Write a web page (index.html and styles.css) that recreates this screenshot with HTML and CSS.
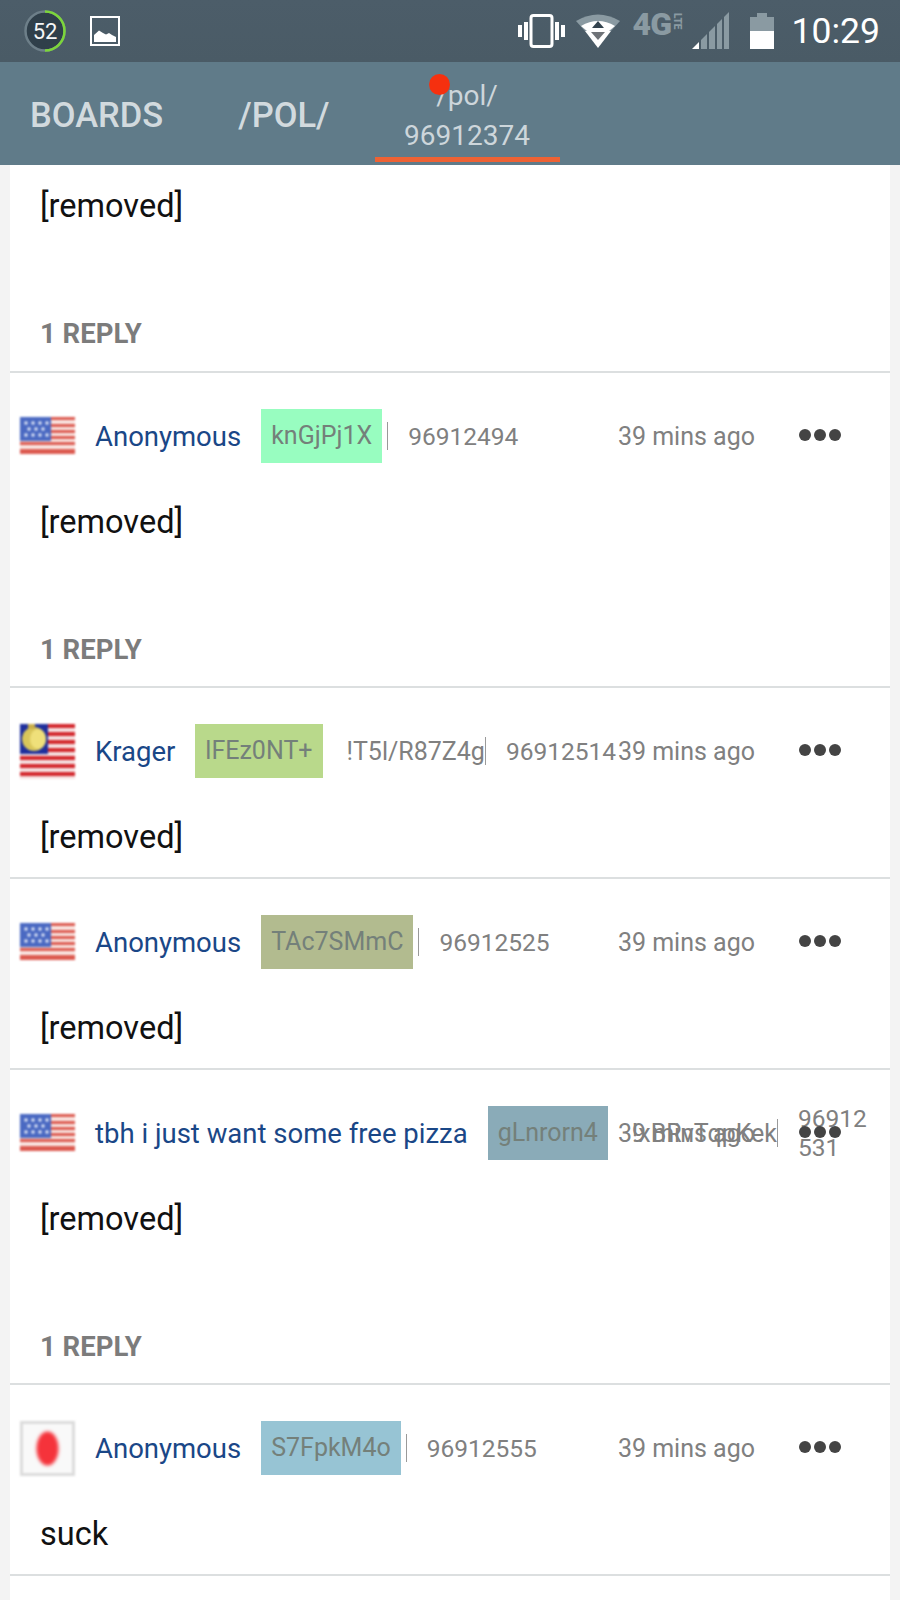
FILE: index.html
```html
<!DOCTYPE html>
<html lang="en">
<head>
<meta charset="utf-8">
<title>/pol/ 96912374</title>
<link rel="stylesheet" href="styles.css">
</head>
<body>
<header class="status">
  <div class="status-left">
    <div class="badge">
      <svg class="badge-ring" viewBox="0 0 44 44" width="44" height="44"><circle cx="22" cy="22" r="19.5" fill="#2f3f4a" stroke="#6d7f89" stroke-width="2.5"/><path d="M22 2.5A19.5 19.5 0 0 1 22 41.5" fill="none" stroke="#7cd63a" stroke-width="2.5"/></svg>
      <span class="badge-num">52</span>
    </div>
    <svg class="pic" viewBox="0 0 30 30" width="30" height="30"><rect x="1" y="1" width="28" height="28" fill="none" stroke="#fff" stroke-width="2"/><path d="M4 26V19L9 14.500L13 17L16 18.500L19 17L22 19L26 21V26Z" fill="#fff"/></svg>
  </div>
  <div class="status-right">
    <svg class="ic-vib" viewBox="0 0 47 34" width="47" height="34"><rect x="13" y="1.500" width="21" height="31" rx="2.500" fill="none" stroke="#fff" stroke-width="3"/><rect x="6" y="8" width="4" height="18" fill="#fff"/><rect x="37" y="8" width="4" height="18" fill="#fff"/><rect x="0" y="11" width="4" height="12" fill="#fff"/><rect x="43" y="11" width="4" height="12" fill="#fff"/></svg>
    <svg class="ic-wifi" viewBox="0 0 44 36" width="44" height="36"><path d="M0 8Q22 -5 44 8L35 18H9Z" fill="#8a9aa2"/><path d="M9 18H35L22 35Z" fill="#fff"/><path d="M5 13Q22 3 39 13L33 18H11Z" fill="#fff"/><path d="M22 8L28 15H16Z" fill="#33434e"/><path d="M15 19H29L22 27Z" fill="#6f7378"/></svg>
    <div class="net"><span class="net-4g">4G</span><span class="net-lte">LTE</span></div>
    <svg class="ic-signal" viewBox="0 0 38 38" width="38" height="38"><path d="M0 37L7 30V37Z" fill="#fff"/><path d="M9 28L15 22V37H9Z" fill="#8a9aa2"/><path d="M17 20L23 14V37H17Z" fill="#8a9aa2"/><path d="M25 12L30 7V37H25Z" fill="#8a9aa2"/><path d="M32 5L37 0V37H32Z" fill="#8a9aa2"/></svg>
    <svg class="ic-batt" viewBox="0 0 24 36" width="24" height="36"><path d="M0 4H7V0H17V4H24V18H0Z" fill="#8a9aa2"/><rect y="18" width="24" height="18" fill="#fff"/></svg>
    <span class="clock">10:29</span>
  </div>
</header>

<nav class="tabs">
  <a class="tab tab-boards">BOARDS</a>
  <a class="tab tab-board">/POL/</a>
  <a class="tab tab-active"><span class="dot"></span><span>/pol/</span><span>96912374</span></a>
</nav>

<main class="list">
  <article class="post post-clipped">
    <p class="body">[removed]</p>
    <p class="replies">1 REPLY</p>
  </article>

  <article class="post">
    <div class="head">
      <svg class="flag flag-us" viewBox="0 0 55 37" width="55" height="37"><use href="#us"/></svg>
      <span class="name">Anonymous</span>
      <span class="tag tag-mint">knGjPj1X</span>
      <span class="trip"></span>
      <span class="sep"></span>
      <span class="id">96912494</span>
      <span class="time">39 mins ago</span>
      <svg class="more" viewBox="0 0 44 14" width="44" height="14"><circle cx="7" cy="7" r="6"/><circle cx="22" cy="7" r="6"/><circle cx="37" cy="7" r="6"/></svg>
    </div>
    <p class="body">[removed]</p>
    <p class="replies">1 REPLY</p>
  </article>

  <article class="post">
    <div class="head">
      <svg class="flag" viewBox="0 0 55 55" width="55" height="55">
        <rect width="55" height="55" fill="#f6e3e3"/>
        <g fill="#d3262c"><rect y="0" width="55" height="4"/><rect y="8" width="55" height="4"/><rect y="16" width="55" height="4"/><rect y="24" width="55" height="4"/><rect y="32" width="55" height="4"/><rect y="40" width="55" height="4"/><rect y="48" width="55" height="4"/></g>
        <rect width="28" height="30" fill="#1f2f9c"/>
        <ellipse cx="14" cy="15" rx="12" ry="12" fill="#d9c65a"/>
        <ellipse cx="18" cy="15" rx="8" ry="10" fill="#efe07a"/>
        <rect x="8" y="0" width="7" height="5" fill="#c9ae4a"/>
      </svg>
      <span class="name">Krager</span>
      <span class="tag tag-lime">lFEz0NT+</span>
      <span class="trip">!T5l/R87Z4g</span>
      <span class="sep"></span>
      <span class="id">96912514</span>
      <span class="time">39 mins ago</span>
      <svg class="more" viewBox="0 0 44 14" width="44" height="14"><circle cx="7" cy="7" r="6"/><circle cx="22" cy="7" r="6"/><circle cx="37" cy="7" r="6"/></svg>
    </div>
    <p class="body">[removed]</p>
  </article>

  <article class="post">
    <div class="head">
      <svg class="flag flag-us" viewBox="0 0 55 37" width="55" height="37"><use href="#us"/></svg>
      <span class="name">Anonymous</span>
      <span class="tag tag-olive">TAc7SMmC</span>
      <span class="trip"></span>
      <span class="sep"></span>
      <span class="id">96912525</span>
      <span class="time">39 mins ago</span>
      <svg class="more" viewBox="0 0 44 14" width="44" height="14"><circle cx="7" cy="7" r="6"/><circle cx="22" cy="7" r="6"/><circle cx="37" cy="7" r="6"/></svg>
    </div>
    <p class="body">[removed]</p>
  </article>

  <article class="post">
    <div class="head">
      <svg class="flag flag-us" viewBox="0 0 55 37" width="55" height="37"><use href="#us"/></svg>
      <span class="name">tbh i just want some free pizza</span>
      <span class="tag tag-slate">gLnrorn4</span>
      <span class="trip">!xBRvTqpKek</span>
      <span class="sep"></span>
      <span class="id">96912531</span>
      <span class="time">39 mins ago</span>
      <svg class="more" viewBox="0 0 44 14" width="44" height="14"><circle cx="7" cy="7" r="6"/><circle cx="22" cy="7" r="6"/><circle cx="37" cy="7" r="6"/></svg>
    </div>
    <p class="body">[removed]</p>
    <p class="replies">1 REPLY</p>
  </article>

  <article class="post">
    <div class="head">
      <svg class="flag" viewBox="0 0 55 55" width="55" height="55">
        <rect width="55" height="55" fill="#dcdcdc"/>
        <rect x="3" y="3" width="49" height="49" fill="#f9f9f9"/>
        <ellipse class="sun" cx="27.500" cy="27.500" rx="11" ry="17" fill="#f5333b"/>
      </svg>
      <span class="name">Anonymous</span>
      <span class="tag tag-sky">S7FpkM4o</span>
      <span class="trip"></span>
      <span class="sep"></span>
      <span class="id">96912555</span>
      <span class="time">39 mins ago</span>
      <svg class="more" viewBox="0 0 44 14" width="44" height="14"><circle cx="7" cy="7" r="6"/><circle cx="22" cy="7" r="6"/><circle cx="37" cy="7" r="6"/></svg>
    </div>
    <p class="body">suck</p>
  </article>
</main>

<svg class="defs" width="0" height="0" aria-hidden="true">
  <defs>
    <g id="us">
      <rect width="55" height="37" fill="#f9e6e2"/>
      <g fill="#dc5a50"><rect y="0" width="55" height="3"/><rect y="7" width="55" height="3"/><rect y="13" width="55" height="3"/><rect y="19" width="55" height="3"/><rect y="25" width="55" height="3"/><rect y="32" width="55" height="5"/></g>
      <rect width="31" height="24" fill="#4a69c2"/>
      <g fill="#e6ecfa"><circle cx="6" cy="6" r="1.700"/><circle cx="13" cy="6" r="1.700"/><circle cx="20" cy="6" r="1.700"/><circle cx="27" cy="6" r="1.700"/><circle cx="9" cy="12" r="1.700"/><circle cx="16" cy="12" r="1.700"/><circle cx="23" cy="12" r="1.700"/><circle cx="6" cy="18" r="1.700"/><circle cx="13" cy="18" r="1.700"/><circle cx="20" cy="18" r="1.700"/><circle cx="27" cy="18" r="1.700"/></g>
    </g>
  </defs>
</svg>
</body>
</html>
```

FILE: styles.css
```css
* { box-sizing: border-box; }
html, body { margin: 0; height: 1600px; overflow: hidden; }
body { background: #f3f3f3; font-family: Roboto, "Liberation Sans", sans-serif; color: #111; }

.status { height: 62px; background: linear-gradient(#4c5d69, #4a5b66); display: flex; justify-content: space-between; align-items: center; padding: 0 20px 0 23px; }
.status-left, .status-right { display: flex; align-items: center; }
.badge { position: relative; width: 44px; height: 44px; }
.badge-ring { display: block; }
.badge-num { position: absolute; inset: 0; display: flex; align-items: center; justify-content: center; color: #f4f6f7; font-size: 22px; }
.pic { margin-left: 23px; }
.ic-vib { margin-right: 11px; }
.ic-wifi { margin-right: 13px; }
.net { display: flex; align-items: flex-start; width: 56px; height: 40px; margin-right: 3px; color: #8a9aa2; font-weight: 900; }
.net-4g { font-size: 32px; line-height: 26px; letter-spacing: -1px; }
.net-lte { writing-mode: vertical-rl; font-size: 10px; line-height: 10px; margin: 2px 0 0 1px; }
.ic-signal { margin-right: 20px; }
.ic-batt { margin-right: 18px; }
.clock { color: #fff; font-size: 35.500px; }

.tabs { height: 103px; background: #607b89; display: flex; align-items: stretch; }
.tab { display: flex; align-items: center; padding-top: 3px; color: #d2dade; font-size: 34.500px; font-weight: 500; }
.tab-boards { margin-left: 30px; margin-right: 75px; }
.tab-board { margin-right: 45px; }
.tab-active { position: relative; width: 185px; height: 100px; flex-direction: column; justify-content: center; font-size: 28px; font-weight: 400; line-height: 40px; color: #cdd6db; border-bottom: 5px solid #ee6234; padding-top: 12px; }
.dot { position: absolute; left: 54px; top: 12px; width: 21px; height: 21px; border-radius: 50%; background: #f5300f; }

.list { margin: 0 10px; height: 1435px; background: #fff; }
.post { padding-top: 36px; border-bottom: 2px solid #dcdfe0; }
.post-clipped { padding-top: 0; padding-bottom: 1px; }
.post-clipped .body { margin-top: 0; padding-top: 19px; }
.head { position: relative; display: flex; align-items: center; height: 54px; padding: 0 22px 0 10px; font-size: 24.5px; color: #808080; }
.flag { flex: none; margin-right: 20px; filter: blur(.9px); }
.flag-us { margin-bottom: 2px; }
.sun { filter: blur(1.5px); }
.name { flex: none; color: #1a4787; font-size: 27.500px; }
.tag { flex: none; height: 54px; line-height: 54px; padding: 0 10px; margin-left: 20px; margin-right: 5px; font-size: 25px; color: #74807a; }
.tag-mint { background: #98fdc0; }
.tag-lime { background: #b9d98b; }
.tag-olive { background: #b2bb8f; }
.tag-slate { background: #8aabb8; }
.tag-sky { background: #97c4d4; }
.trip { flex: none; margin-left: 19px; font-size: 25px; }
.trip:empty { margin-left: 0; }
.sep { flex: none; width: 1px; height: 28px; background: #9a9a9a; margin-right: 20px; }
.id { flex: 0 1 auto; min-width: 0; word-break: break-all; line-height: 29px; }
.time { position: absolute; right: 135px; top: 1px; line-height: 54px; font-size: 25px; white-space: nowrap; }
.more { position: absolute; left: 788px; top: 19px; fill: #444; }

.body { margin: 37px 0 0; padding: 0 30px 18px; font-size: 32.500px; line-height: 44px; }
.replies { margin: 0; padding: 73px 30px 21px; font-size: 27.500px; line-height: 30px; font-weight: 700; color: #7c7c7c; }
.defs { position: absolute; }
```
